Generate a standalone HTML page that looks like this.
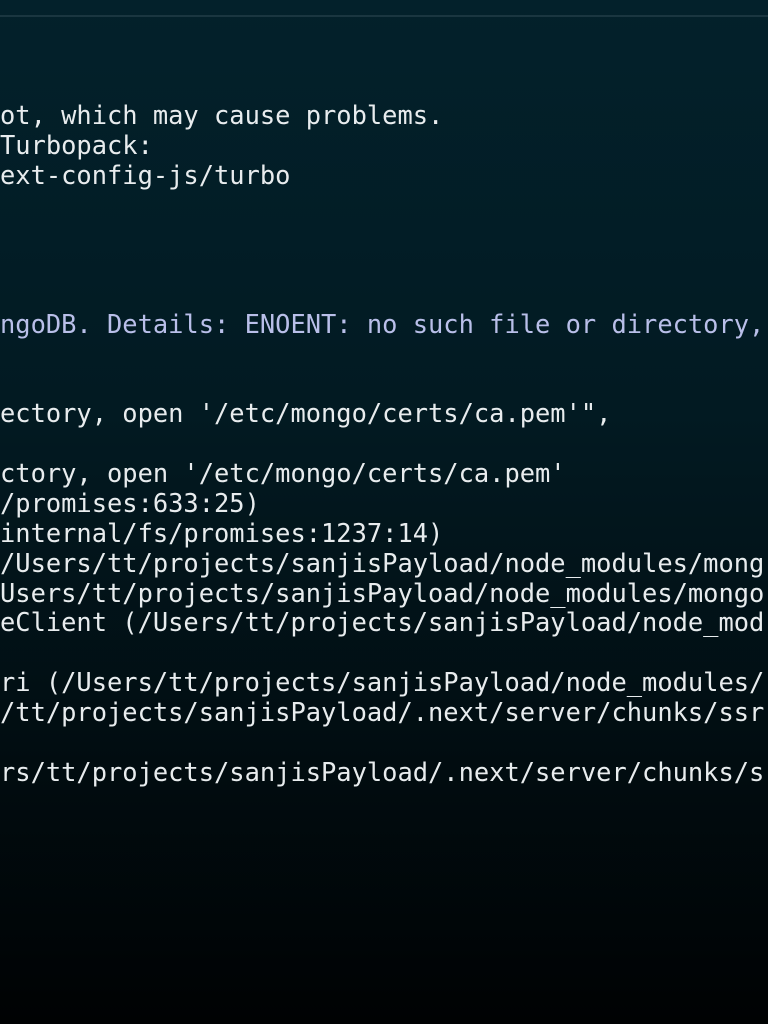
<!DOCTYPE html>
<html><head><style>
html,body{margin:0;padding:0;}
body{width:768px;height:1024px;overflow:hidden;position:relative;
background:linear-gradient(180deg,#03212b 0%,#021a22 40%,#010c10 75%,#000203 100%);}
.top{position:absolute;left:0;top:15px;width:768px;height:2px;background:#1a3640;}
pre{position:absolute;left:0;top:101px;margin:0;font-family:"DejaVu Sans Mono","Liberation Mono",monospace;
font-size:25.4px;line-height:29.85px;color:#e8ecee;white-space:pre;}
.p{color:#b9bfe9;}
</style></head><body>
<div class="top"></div>
<pre>ot, which may cause problems.
Turbopack:
ext-config-js/turbo




<span class="p">ngoDB. Details: ENOENT: no such file or directory,</span>


ectory, open '/etc/mongo/certs/ca.pem'",

ctory, open '/etc/mongo/certs/ca.pem'
/promises:633:25)
internal/fs/promises:1237:14)
/Users/tt/projects/sanjisPayload/node_modules/mong
Users/tt/projects/sanjisPayload/node_modules/mongo
eClient (/Users/tt/projects/sanjisPayload/node_mod

ri (/Users/tt/projects/sanjisPayload/node_modules/
/tt/projects/sanjisPayload/.next/server/chunks/ssr

rs/tt/projects/sanjisPayload/.next/server/chunks/s</pre>
</body></html>
